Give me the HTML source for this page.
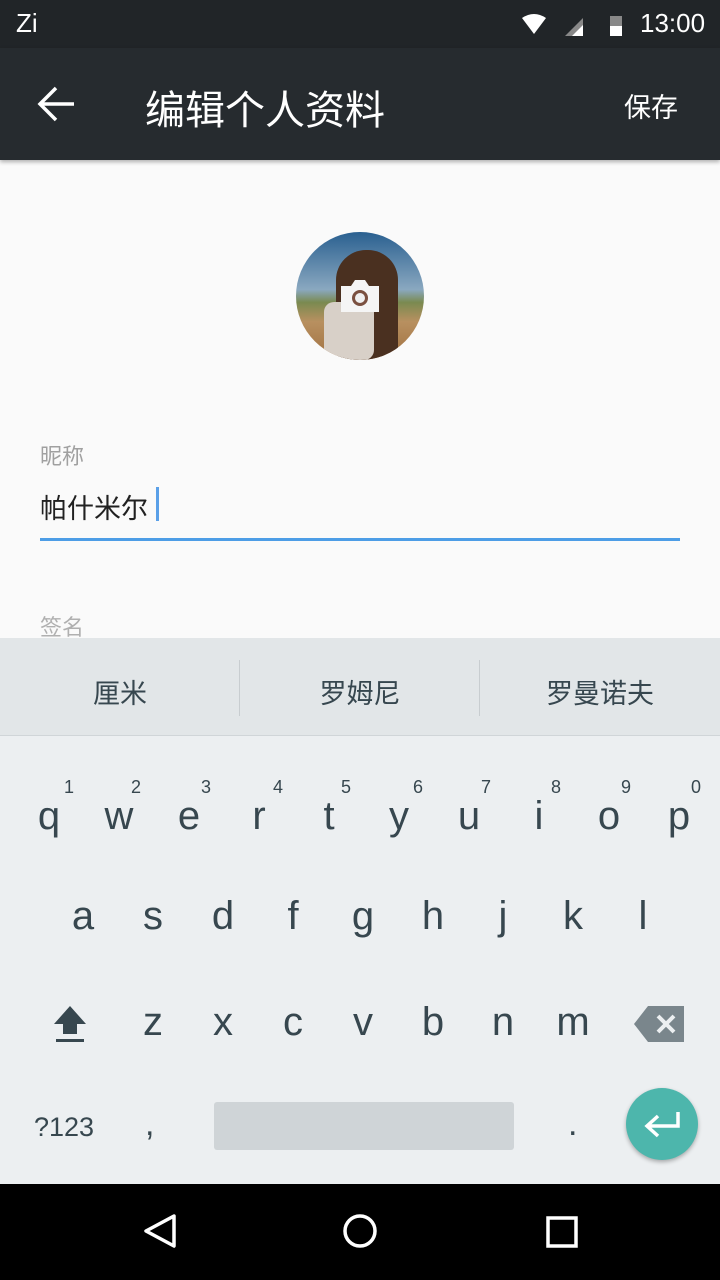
<!DOCTYPE html><html><head><meta charset="utf-8"><style>
body{margin:0;width:720px;height:1280px;position:relative;overflow:hidden;background:#fafafa;font-family:"Liberation Sans","Noto Sans CJK SC",sans-serif}
.a{position:absolute}
.k{position:absolute;font-size:40px;color:#37474f;text-align:center;width:70px}
.n{position:absolute;font-size:18px;color:#37474f;width:20px;text-align:center}
</style></head><body>
<div class="a" style="left:0;top:0;width:720px;height:48px;background:#212528"></div>
<div class="a" style="left:16px;top:8px;color:#fff;font-size:26px">Zi</div>
<div class="a" style="left:640px;top:8px;color:#fff;font-size:26px">13:00</div>
<svg class="a" style="left:520px;top:12px" width="110" height="26"><path d="M2 6 Q14 -2 26 6 L14 22Z" fill="#fff"/><path d="M45 24 L63 6 V24Z" fill="#888"/><path d="M52 24 L63 13 V24Z" fill="#fff"/><rect x="90" y="4" width="12" height="20" fill="#888"/><rect x="90" y="14" width="12" height="10" fill="#fff"/></svg>
<div class="a" style="left:0;top:48px;width:720px;height:112px;background:#262b2f;box-shadow:0 2px 4px rgba(0,0,0,.3)"></div>
<svg class="a" style="left:36px;top:86px" width="40" height="36"><path d="M38 18H4M20 2L4 18L20 34" stroke="#fff" stroke-width="3.5" fill="none"/></svg>
<div class="a" style="left:145px;top:78px;color:#fff;font-size:40px">编辑个人资料</div>
<div class="a" style="left:624px;top:86px;color:#fff;font-size:27px">保存</div>
<div class="a" style="left:296px;top:232px;width:128px;height:128px;border-radius:50%;overflow:hidden;background:linear-gradient(#2a6090 0%,#8aa8c0 45%,#7a8a50 55%,#b89060 70%,#a07040 100%)">
<div class="a" style="left:40px;top:18px;width:62px;height:110px;border-radius:30px 30px 10px 10px;background:#4a3020"></div>
<div class="a" style="left:28px;top:70px;width:50px;height:58px;background:#d8d0c8;border-radius:10px"></div>
</div>
<svg class="a" style="left:339px;top:278px" width="42" height="36"><path d="M2 8h10l4-6h10l4 6h10v26H2Z" fill="#f5f5f5"/><circle cx="21" cy="20" r="8" fill="#7a5040"/><circle cx="21" cy="20" r="5" fill="#f0f0f0"/></svg>
<div class="a" style="left:40px;top:439px;color:#a0a0a0;font-size:22px">昵称</div>
<div class="a" style="left:40px;top:487px;color:#212121;font-size:27px">帕什米尔</div>
<div class="a" style="left:156px;top:487px;width:3px;height:34px;background:#5aa0e8"></div>
<div class="a" style="left:40px;top:538px;width:640px;height:3px;background:#4d9de6"></div>
<div class="a" style="left:40px;top:610px;color:#b0b0b0;font-size:22px">签名</div>
<div class="a" style="left:0;top:638px;width:720px;height:546px;background:#eceff1"></div>
<div class="a" style="left:0;top:638px;width:720px;height:97px;background:#e2e6e8;border-bottom:1px solid #d0d5d8"></div>
<div class="a" style="left:239px;top:660px;width:1px;height:56px;background:#c8cdd0"></div>
<div class="a" style="left:479px;top:660px;width:1px;height:56px;background:#c8cdd0"></div>
<div class="a" style="left:0;top:672px;width:240px;text-align:center;font-size:27px;color:#37474f">厘米</div>
<div class="a" style="left:240px;top:672px;width:240px;text-align:center;font-size:27px;color:#37474f">罗姆尼</div>
<div class="a" style="left:480px;top:672px;width:240px;text-align:center;font-size:27px;color:#37474f">罗曼诺夫</div>
<div class="k" style="left:14px;top:794px">q</div><div class="n" style="left:59px;top:777px">1</div>
<div class="k" style="left:84px;top:794px">w</div><div class="n" style="left:126px;top:777px">2</div>
<div class="k" style="left:154px;top:794px">e</div><div class="n" style="left:196px;top:777px">3</div>
<div class="k" style="left:224px;top:794px">r</div><div class="n" style="left:268px;top:777px">4</div>
<div class="k" style="left:294px;top:794px">t</div><div class="n" style="left:336px;top:777px">5</div>
<div class="k" style="left:364px;top:794px">y</div><div class="n" style="left:408px;top:777px">6</div>
<div class="k" style="left:434px;top:794px">u</div><div class="n" style="left:476px;top:777px">7</div>
<div class="k" style="left:504px;top:794px">i</div><div class="n" style="left:546px;top:777px">8</div>
<div class="k" style="left:574px;top:794px">o</div><div class="n" style="left:616px;top:777px">9</div>
<div class="k" style="left:644px;top:794px">p</div><div class="n" style="left:686px;top:777px">0</div>
<div class="k" style="left:48px;top:894px">a</div><div class="k" style="left:118px;top:894px">s</div><div class="k" style="left:188px;top:894px">d</div><div class="k" style="left:258px;top:894px">f</div><div class="k" style="left:328px;top:894px">g</div><div class="k" style="left:398px;top:894px">h</div><div class="k" style="left:468px;top:894px">j</div><div class="k" style="left:538px;top:894px">k</div><div class="k" style="left:608px;top:894px">l</div>
<svg class="a" style="left:50px;top:1004px" width="40" height="40"><path d="M20 2L36 20H27V30H13V20H4Z" fill="#37474f"/><rect x="6" y="35" width="28" height="3" fill="#37474f"/></svg>
<div class="k" style="left:118px;top:1000px">z</div><div class="k" style="left:188px;top:1000px">x</div><div class="k" style="left:258px;top:1000px">c</div><div class="k" style="left:328px;top:1000px">v</div><div class="k" style="left:398px;top:1000px">b</div><div class="k" style="left:468px;top:1000px">n</div><div class="k" style="left:538px;top:1000px">m</div>
<svg class="a" style="left:634px;top:1006px" width="52" height="36"><path d="M14 0H50V36H14L0 18Z" fill="#7a868c"/><path d="M24 10L40 26M40 10L24 26" stroke="#eceff1" stroke-width="4"/></svg>
<div class="a" style="left:34px;top:1112px;font-size:27px;color:#37474f">?123</div>
<div class="a" style="left:145px;top:1105px;font-size:34px;color:#37474f">,</div>
<div class="a" style="left:214px;top:1102px;width:300px;height:48px;background:#cfd4d7;border-radius:3px"></div>
<div class="a" style="left:568px;top:1105px;font-size:34px;color:#37474f">.</div>
<div class="a" style="left:626px;top:1088px;width:72px;height:72px;border-radius:50%;background:#4db6ac;box-shadow:0 2px 4px rgba(0,0,0,.3)"></div>
<svg class="a" style="left:642px;top:1108px" width="40" height="32"><path d="M36 4V18H6M16 8L5 18L16 28" stroke="#fff" stroke-width="3.5" fill="none"/></svg>
<div class="a" style="left:0;top:1184px;width:720px;height:96px;background:#000"></div>
<svg class="a" style="left:0;top:1184px" width="720" height="96"><path d="M174 32L146 47L174 62Z" stroke="#fff" stroke-width="3.5" fill="none" stroke-linejoin="round"/><circle cx="360" cy="47" r="15" stroke="#fff" stroke-width="3.5" fill="none"/><rect x="548" y="34" width="28" height="28" stroke="#fff" stroke-width="3.5" fill="none"/></svg>
</body></html>
